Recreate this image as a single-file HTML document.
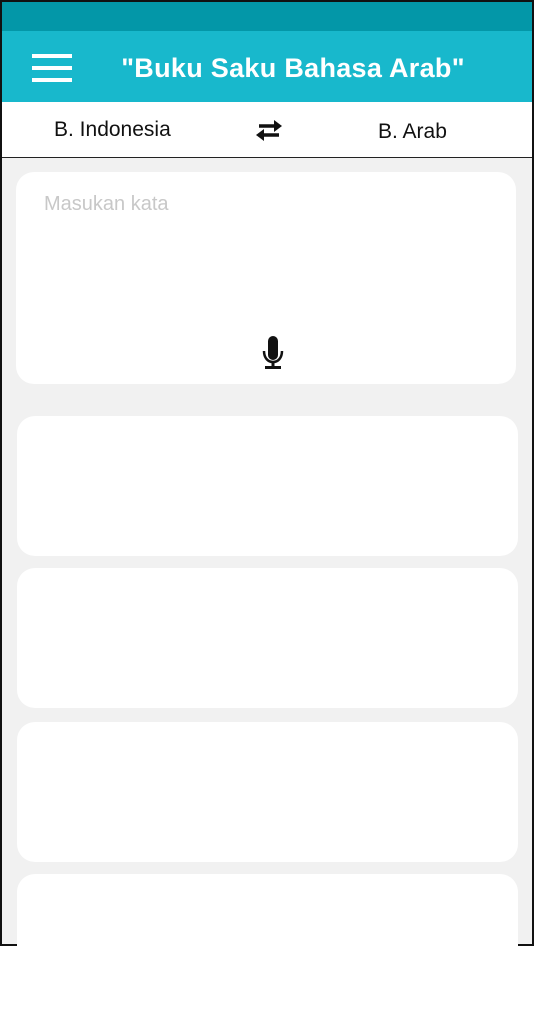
<!DOCTYPE html>
<html><head><style>
*{margin:0;padding:0;box-sizing:border-box}
body{width:534px;height:1014px;background:#fff;position:relative;overflow:hidden;font-family:"Liberation Sans",sans-serif}
.frame{position:absolute;left:0;top:0;width:534px;height:946px;border:2px solid #111;border-top:none;background:#f1f1f1}
.status{position:absolute;left:0;top:0;width:534px;height:31px;background:#0397a8;border:2px solid #111;border-bottom:none}
.header{position:absolute;left:2px;top:31px;width:530px;height:71px;background:#18b8cc}
.ham{position:absolute;left:32px;width:40px;height:4px;background:#fff}
.title{position:absolute;left:0;width:586px;text-align:center;color:#fff;font-weight:bold;font-family:"Liberation Sans",sans-serif}
.sub{position:absolute;left:2px;top:102px;width:530px;height:56px;background:#fff;border-bottom:1px solid #222}
.card{position:absolute;background:#fff;border-radius:18px}
</style></head><body>
<div class="frame"></div>
<div class="status"></div>
<div class="header"></div>
<div class="ham" style="top:54px"></div>
<div class="ham" style="top:66px"></div>
<div class="ham" style="top:78px"></div>
<div class="title" style="top:53px;font-size:27px;letter-spacing:0.3px">"Buku Saku Bahasa Arab"</div>
<div class="sub"></div>
<div style="position:absolute;left:54px;top:118px;font-size:21px;color:#111">B. Indonesia</div>
<div style="position:absolute;left:378px;top:120px;font-size:21px;color:#111">B. Arab</div>
<svg style="position:absolute;left:254px;top:119px" width="30" height="24" viewBox="0 0 30 24">
<path d="M5 7H22" stroke="#111" stroke-width="3.5"/><path d="M20 1L28 7L20 13Z" fill="#111"/>
<path d="M25 16H8" stroke="#111" stroke-width="3.5"/><path d="M10 10L2 16L10 22Z" fill="#111"/>
</svg>
<div class="card" style="left:16px;top:172px;width:500px;height:212px"></div>
<div style="position:absolute;left:44px;top:193px;font-size:20px;color:#c8c8c8">Masukan kata</div>
<svg style="position:absolute;left:260px;top:334px" width="28" height="36" viewBox="0 0 28 36">
<rect x="8" y="2" width="10" height="24" rx="5" fill="#111"/>
<path d="M4 17C4 24 8 28 13 28C18 28 22 24 22 17" stroke="#111" stroke-width="2.5" fill="none"/>
<path d="M13 28V33M5 33.5H21" stroke="#111" stroke-width="3"/>
</svg>
<div class="card" style="left:17px;top:416px;width:501px;height:140px"></div>
<div class="card" style="left:17px;top:568px;width:501px;height:140px"></div>
<div class="card" style="left:17px;top:722px;width:501px;height:140px"></div>
<div class="card" style="left:17px;top:874px;width:501px;height:72px;border-radius:18px 18px 0 0"></div>
</body></html>
